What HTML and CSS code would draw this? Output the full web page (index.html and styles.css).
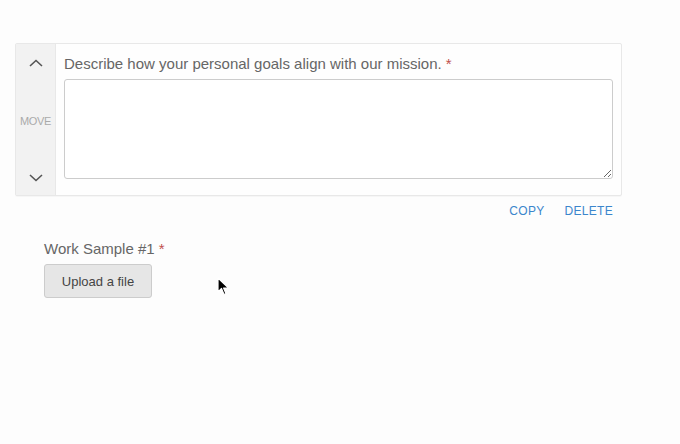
FILE: index.html
```html
<!DOCTYPE html>
<html>
<head>
<meta charset="utf-8">
<link rel="stylesheet" href="styles.css">
</head>
<body>
<div class="page">
  <div class="card">
    <div class="mover">
      <svg class="chev" width="14" height="8" viewBox="0 0 14 8"><path d="M1 7 L7 1.5 L13 7" fill="none" stroke="#555" stroke-width="1.6"/></svg>
      <span class="move-label">MOVE</span>
      <svg class="chev" width="14" height="8" viewBox="0 0 14 8"><path d="M1 1 L7 6.5 L13 1" fill="none" stroke="#555" stroke-width="1.6"/></svg>
    </div>
    <div class="field">
      <label class="label">Describe how your personal goals align with our mission. <span class="req">*</span></label>
      <textarea class="textarea"></textarea>
    </div>
  </div>
  <div class="actions">
    <a class="action">COPY</a>
    <a class="action">DELETE</a>
  </div>
  <div class="upload">
    <div class="label">Work Sample #1 <span class="req">*</span></div>
    <button class="btn">Upload a file</button>
  </div>
  <svg class="cursor" width="14" height="20" viewBox="0 0 14 20"><path d="M1 1 L1 15 L4.5 11.5 L7 17.5 L9 16.7 L6.6 11 L11.5 11 Z" fill="#000" stroke="#fff" stroke-width="1.2" stroke-linejoin="round"/></svg>
</div>
</body>
</html>
```
FILE: styles.css
```css
html, body {
  margin: 0;
  padding: 0;
  background: #fdfdfd;
}
body {
  font-family: "Liberation Sans", Arial, sans-serif;
  color: #666;
}
.page {
  position: relative;
  width: 680px;
  height: 444px;
  padding-top: 43px;
  box-sizing: border-box;
}
.card {
  margin-left: 15px;
  width: 607px;
  box-sizing: border-box;
  border: 1px solid #e8e8e8;
  border-radius: 2px;
  background: #fefefe;
  display: flex;
  box-shadow: 0 1px 1px rgba(0,0,0,0.03);
}
.mover {
  width: 39px;
  flex: none;
  background: #f2f2f2;
  border-right: 1px solid #e8e8e8;
  display: flex;
  flex-direction: column;
  align-items: center;
  justify-content: space-between;
  padding: 15px 0 13px;
}
.chev { display: block; }
.move-label {
  font-size: 11px;
  color: #aaa;
  letter-spacing: -0.3px;
}
.field {
  flex: 1;
  padding: 11px 8px 16px 8px;
  display: flex;
  flex-direction: column;
}
.label {
  font-size: 15px;
  line-height: 18px;
  color: #666;
  margin-bottom: 6px;
}
.req { color: #c0504d; }
.textarea {
  height: 100px;
  box-sizing: border-box;
  border: 1px solid #ccc;
  border-radius: 3px;
  background: #fff;
  margin: 0;
  padding: 4px;
  resize: vertical;
  font-family: inherit;
}
.actions {
  width: 613px;
  display: flex;
  justify-content: flex-end;
  gap: 20px;
  margin-top: 8px;
}
.action {
  font-size: 12px;
  line-height: 14px;
  letter-spacing: 0.3px;
  color: #3b86cc;
  cursor: pointer;
}
.upload {
  margin-left: 44px;
  margin-top: 22px;
}
.upload .label {
  margin-bottom: 6px;
}
.btn {
  width: 108px;
  height: 34px;
  border: 1px solid #ccc;
  border-radius: 3px;
  background: #e6e6e6;
  font-family: inherit;
  font-size: 13px;
  color: #444;
  padding: 0;
}
.cursor {
  position: absolute;
  left: 217px;
  top: 277px;
}
```
